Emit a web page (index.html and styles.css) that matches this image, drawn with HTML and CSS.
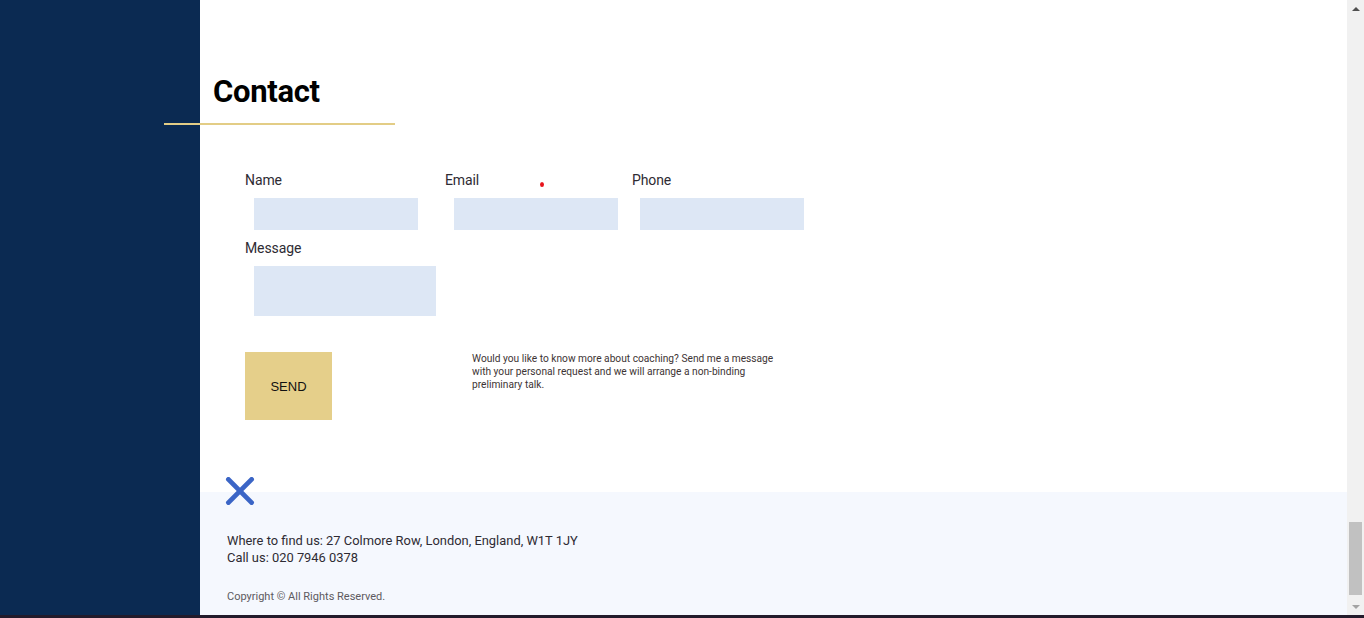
FILE: index.html
```html
<!DOCTYPE html>
<html lang="en">
<head>
<meta charset="utf-8">
<title>Contact</title>
<link rel="stylesheet" href="styles.css">
</head>
<body>
<div class="screen">
  <div class="window">
    <aside class="sidebar"></aside>
    <main class="main">
      <section class="contact">
        <h1 class="title">Contact</h1>
        <div class="rule"></div>
        <form class="form">
          <div class="row">
            <div class="field f-name">
              <label class="label">Name</label>
              <div class="input"></div>
            </div>
            <div class="field f-email">
              <label class="label">Email</label>
              <div class="input"></div>
              <span class="dot"></span>
            </div>
            <div class="field f-phone">
              <label class="label">Phone</label>
              <div class="input"></div>
            </div>
          </div>
          <div class="field f-msg">
            <label class="label">Message</label>
            <div class="input textarea"></div>
          </div>
          <div class="actions">
            <button type="button" class="send">SEND</button>
            <p class="note">Would you like to know more about coaching? Send me a message with your personal request and we will arrange a non-binding preliminary talk.</p>
          </div>
        </form>
      </section>
      <footer class="footer">
        <svg class="logo-x" width="30" height="29" viewBox="0 0 30 29" aria-hidden="true">
          <path d="M3 2.5 L27 26.5 M27 2.5 L3 26.5" stroke="#3b65c6" stroke-width="5" stroke-linecap="round" fill="none"/>
        </svg>
        <div class="address">
          <div>Where to find us: 27 Colmore Row, London, England, W1T 1JY</div>
          <div>Call us: 020 7946 0378</div>
        </div>
        <div class="copyright">Copyright © All Rights Reserved.</div>
      </footer>
    </main>
    <div class="scrollbar">
      <div class="arrow up"></div>
      <div class="track"><div class="thumb"></div></div>
      <div class="arrow down"></div>
    </div>
  </div>
  <div class="taskbar"></div>
</div>
</body>
</html>
```
FILE: styles.css
```css
* { box-sizing: border-box; }
html, body { margin: 0; padding: 0; height: 100%; overflow: hidden; }
body { font-family: Roboto, "Liberation Sans", sans-serif; color: #2e2b33; background: #fff; }

.screen { display: flex; flex-direction: column; width: 1364px; height: 618px; }
.window { display: flex; flex: 1; min-height: 0; }
.taskbar { height: 3px; background: #231b2b; }

.sidebar { width: 200px; background: #0b2a52; flex: none; }

.main { flex: 1; display: flex; flex-direction: column; background: #fff; min-width: 0; }

.contact { padding: 74px 0 0 13px; flex: 1; }
.title { margin: 0; font-size: 31px; line-height: 36px; font-weight: 700; color: #000; letter-spacing: -0.3px; }
.rule { margin: 13px 0 0 -49px; width: 231px; height: 2px; background: #e3cd86; }

.form { padding: 45px 0 0 32px; display: flex; flex-direction: column; gap: 8px; }
.row { display: flex; }
.field { display: flex; flex-direction: column; gap: 8px; position: relative; }
.f-name { width: 200px; }
.f-email { width: 187px; }
.label { font-size: 14px; line-height: 20px; color: #2e2b33; letter-spacing: -0.1px; }
.input { width: 164px; height: 32px; margin-left: 9px; background: #dde7f5; }
.f-phone .input { margin-left: 8px; }
.textarea { width: 182px; height: 50px; }
.dot { position: absolute; left: 95px; top: 12px; width: 4px; height: 5px; border-radius: 50%; background: #e8141c; }

.actions { display: flex; align-items: flex-start; gap: 140px; margin-top: 28px; }
.send { width: 87px; height: 68px; border: 0; background: #e5cf8a; font-family: "Liberation Sans", Arial, sans-serif; font-size: 13px; color: #111; padding: 0; }
.note { margin: 0; width: 312px; font-size: 10.2px; line-height: 13px; color: #3d3434; }

.footer { background: #f5f8fe; padding: 0 0 11px 27px; height: 123px; display: flex; flex-direction: column; }
.logo-x { display: block; margin: -15px 0 0 -2px; }
.address { margin-top: 27px; font-size: 12.9px; line-height: 17px; color: #2e2b33; }
.copyright { margin-top: 24px; font-size: 11px; line-height: 14px; color: #5d5a60; }

.scrollbar { width: 17px; flex: none; background: #f1f1f1; display: flex; flex-direction: column; }
.arrow { height: 17px; display: flex; align-items: center; justify-content: center; }
.arrow.up::before { content: ""; border-left: 4px solid transparent; border-right: 4px solid transparent; border-bottom: 4px solid #505050; }
.arrow.down::before { content: ""; border-left: 4px solid transparent; border-right: 4px solid transparent; border-top: 4px solid #a3a3a3; }
.track { flex: 1; display: flex; flex-direction: column; justify-content: flex-end; padding: 0 2px; }
.thumb { height: 73px; background: #c1c1c1; margin-bottom: 3px; }
```
